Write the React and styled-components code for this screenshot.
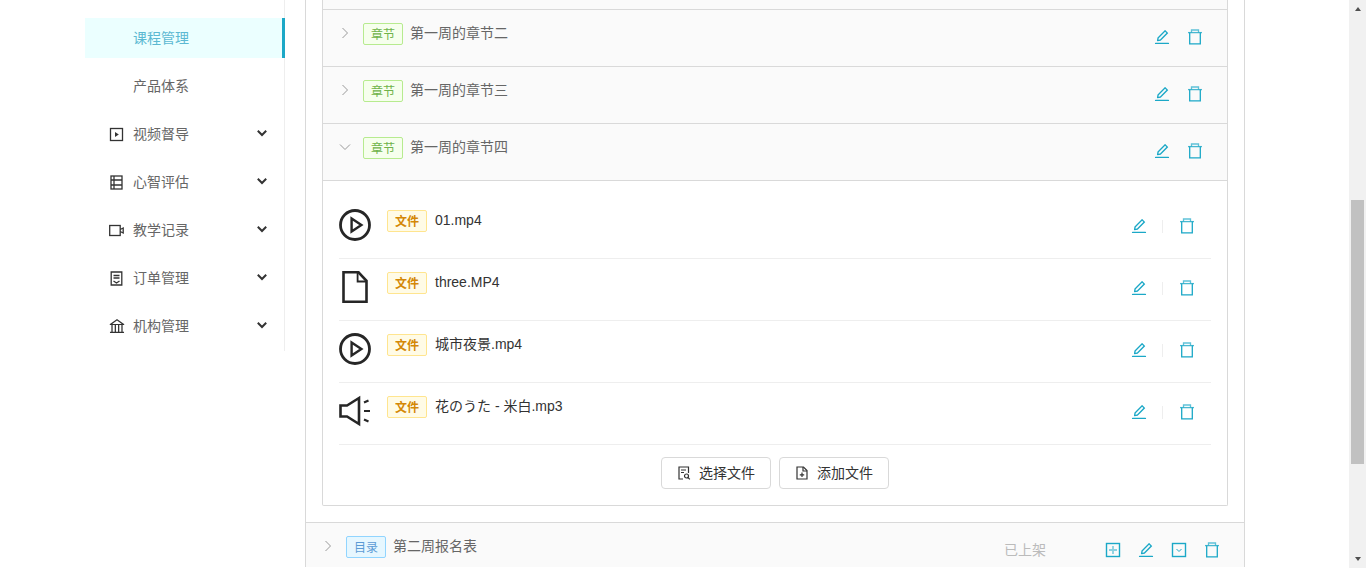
import React from "react";
import styled, { createGlobalStyle } from "styled-components";
import { AiOutlineEdit, AiOutlineBank } from "react-icons/ai";

const GlobalStyle = createGlobalStyle`
html, body {
  margin: 0;
  height: 568px;
  overflow: hidden;
  background: #fff;
}
body {
  font-family: "Liberation Sans", "Noto Sans CJK SC", sans-serif;
  font-size: 14px;
}
* { box-sizing: border-box; }
`;

const Shell = styled.div`
  display: flex;
  height: 568px;
  overflow: hidden;
`;

const Page = styled.div`
  flex: 1;
  display: flex;
  align-items: flex-start;
  padding-left: 85px;
  overflow: hidden;
`;

/* sidebar */
const Sidebar = styled.ul`
  width: 200px;
  height: 351px;
  flex: none;
  margin: 0;
  padding: 18px 0 0;
  list-style: none;
  border-right: 1px solid #eee;
  display: flex;
  flex-direction: column;
  gap: 8px;
`;

const MenuItem = styled.li`
  position: relative;
  width: 200px;
  height: 40px;
  display: flex;
  align-items: center;
  padding: 0 17px 0 24px;
  gap: 9px;
  color: ${(p) => (p.$active ? "#5cb9d2" : "#666")};
  background: ${(p) => (p.$active ? "#ebffff" : "transparent")};
  ${(p) => p.$active && "border-right: 3px solid #1ba8c7;"}
`;

const MenuIcon = styled.span`
  width: 15px;
  height: 15px;
  flex: none;
  display: flex;
  align-items: center;
  justify-content: center;
  color: #333;
`;

const MenuLabel = styled.span`
  flex: 1;
  line-height: 22px;
`;

/* main card */
const Card = styled.main`
  width: 940px;
  flex: none;
  margin-left: 20px;
  border-left: 1px solid #d9d9d9;
  border-right: 1px solid #d9d9d9;
`;

const CardBody = styled.div`
  padding: 0 16px 16px;
`;

const ChapterBox = styled.div`
  border: 1px solid #d9d9d9;
  border-top: none;
  border-radius: 0 0 2px 2px;
`;

const TopStub = styled.div`
  height: 9px;
  background: #fafafa;
`;

const Header = styled.div`
  height: ${(p) => (p.$tall ? "45px" : "57px")};
  display: flex;
  align-items: flex-start;
  padding: 13px 24px 0 16px;
  background: #fafafa;
  border-top: 1px solid #d9d9d9;
`;

const Chevron = styled.svg`
  width: 12px;
  height: 12px;
  flex: none;
  margin: 4px 12px 0 0;
  color: #999;
`;

const Tag = styled.span`
  width: 40px;
  height: 22px;
  flex: none;
  display: flex;
  align-items: center;
  justify-content: center;
  padding-bottom: 2px;
  font-size: 12px;
  border-radius: 2px;
  border: 1px solid ${(p) => p.$border};
  background: ${(p) => p.$bg};
  color: ${(p) => p.$color};
  font-weight: ${(p) => (p.$bold ? 700 : 400)};
`;

const Title = styled.span`
  flex: 1;
  margin-left: 7px;
  line-height: 20px;
  color: #666;
`;

const HeaderActions = styled.div`
  display: flex;
  gap: 17px;
  margin-top: 6px;
  color: #1ba8c7;
`;

const Status = styled.span`
  margin: 4px 59px 0 0;
  line-height: 20px;
  color: #bbb;
`;

const Panel = styled.div`
  border-top: 1px solid #d9d9d9;
  padding: 16px 16px 16px;
`;

const FileRow = styled.div`
  height: 62px;
  display: flex;
  align-items: flex-start;
  padding-top: 12px;
  border-bottom: 1px solid #eee;
`;

const FileIcon = styled.svg`
  width: 32px;
  height: 32px;
  flex: none;
  margin-right: 16px;
  color: #262626;
`;

const FileMeta = styled.div`
  flex: 1;
  display: flex;
  align-items: flex-start;
  margin-top: 1px;
`;

const FileName = styled.span`
  margin-left: 8px;
  line-height: 20px;
  color: #333;
`;

const RowActions = styled.ul`
  display: flex;
  margin: 0;
  padding: 0;
  list-style: none;
  margin-top: 7px;
`;

const RowAction = styled.li`
  position: relative;
  width: 48px;
  height: 20px;
  display: flex;
  justify-content: center;
  align-items: center;
  color: #1ba8c7;
  ${(p) => p.$divided && `
    &::after {
      content: "";
      position: absolute;
      right: 0;
      top: 4px;
      width: 1px;
      height: 13px;
      background: #eee;
    }
  `}
`;

const ButtonBar = styled.div`
  display: flex;
  justify-content: center;
  gap: 8px;
  margin-top: 12px;
`;

const Button = styled.button`
  width: 110px;
  height: 32px;
  display: flex;
  align-items: center;
  justify-content: center;
  gap: 8px;
  padding: 0 0 2px;
  font: inherit;
  color: #333;
  background: #fff;
  border: 1px solid #d9d9d9;
  border-radius: 4px;
`;

const ButtonIcon = styled.svg`
  width: 14px;
  height: 14px;
  flex: none;
  margin-top: 2px;
  color: #333;
`;

const ActionSvg = styled.svg`
  width: 16px;
  height: 16px;
  flex: none;
  display: block;
`;

const EditBox = styled.span`
  width: 16px;
  height: 16px;
  flex: none;
  display: flex;
  align-items: center;
  justify-content: center;
`;

/* scrollbar */
const Scrollbar = styled.div`
  width: 17px;
  flex: none;
  display: flex;
  flex-direction: column;
  align-items: center;
  background: #f1f1f1;
  height: 568px;
`;

const Arrow = styled.span`
  width: 0;
  height: 0;
  border-left: 3.5px solid transparent;
  border-right: 3.5px solid transparent;
  ${(p) => (p.$down ? "border-top: 4px solid #505050; margin-top: 93px;" : "border-bottom: 4px solid #505050; margin-top: 7px;")}
`;

const Thumb = styled.div`
  width: 13px;
  height: 264px;
  margin-top: 189px;
  background: #c1c1c1;
`;

const Edit = () => (
  <EditBox>
    <AiOutlineEdit size={18} style={{ flex: "none" }} />
  </EditBox>
);

const Trash = () => (
  <ActionSvg viewBox="0 0 16 16" fill="none" stroke="currentColor" strokeWidth="1.3">
    <path d="M1 3.600h14" strokeOpacity=".8" />
    <path d="M4.500 3.400V1h7v2.400" strokeOpacity=".7" />
    <path d="M2.700 3.600v11.200h10.600V3.600" />
  </ActionSvg>
);

const PlusBox = () => (
  <ActionSvg viewBox="0 0 16 16" fill="none" stroke="currentColor">
    <rect x="1.500" y="1.500" width="13" height="13" strokeWidth="1.400" />
    <path d="M8 4v8M4 8h8" strokeWidth="1.800" strokeOpacity=".5" />
  </ActionSvg>
);

const DownBox = () => (
  <ActionSvg viewBox="0 0 16 16" fill="none" stroke="currentColor">
    <rect x="1.500" y="1.500" width="13" height="13" strokeWidth="1.400" />
    <path d="M5.500 7l2.500 2.500L10.500 7" strokeWidth="1" />
  </ActionSvg>
);

const Arrowhead = ({ open }) => (
  <Chevron viewBox="0 0 12 12" fill="none" stroke="currentColor" strokeWidth="1">
    {open ? <path d="M1 3.500l5 5 5-5" /> : <path d="M3.500 1l5 5-5 5" />}
  </Chevron>
);

const PlayFile = () => (
  <FileIcon viewBox="0 0 32 32" fill="none" stroke="currentColor" strokeWidth="2.800">
    <circle cx="16" cy="16" r="14.500" />
    <path d="M12.600 9.400v13.200l9.800-6.600z" strokeWidth="2.400" />
  </FileIcon>
);

const BlankFile = () => (
  <FileIcon viewBox="0 0 32 32" fill="none" stroke="currentColor" strokeWidth="2.600">
    <path d="M4.500 1.300h15l8 8.500v21H4.500z" />
    <path d="M18.600 1.300v9.200h9" strokeWidth="1.800" />
  </FileIcon>
);

const SoundFile = () => (
  <FileIcon viewBox="0 0 32 32" fill="none" stroke="currentColor" strokeWidth="2.600">
    <path d="M1.500 10.500h6.500L20 3v26L8 21.500H1.500z" />
    <path d="M25 7.500l4.500-2M25 16h6M25 24.500l4.500 2" strokeWidth="2.200" />
  </FileIcon>
);

const MenuGlyph = ({ children }) => (
  <svg viewBox="0 0 15 15" width="15" height="15" fill="none" stroke="currentColor" strokeWidth="1.300">
    {children}
  </svg>
);

const MenuDown = styled.svg`
  width: 12px;
  height: 12px;
  flex: none;
  margin-top: -3px;
  color: #333;
`;

const menuItems = [
  { label: "课程管理", active: true },
  { label: "产品体系" },
  {
    label: "视频督导",
    sub: true,
    icon: (
      <MenuGlyph>
        <rect x="1.500" y="1.500" width="12" height="12" />
        <path d="M6 5v5l3.800-2.500z" fill="currentColor" stroke="none" />
      </MenuGlyph>
    ),
  },
  {
    label: "心智评估",
    sub: true,
    icon: (
      <MenuGlyph>
        <rect x="2" y="1" width="11" height="13" />
        <path d="M5 1v13M2 5h11M2 10h11" />
      </MenuGlyph>
    ),
  },
  {
    label: "教学记录",
    sub: true,
    icon: (
      <MenuGlyph>
        <rect x=".7" y="2.500" width="10.500" height="10" />
        <path d="M11.200 6.500l3-1.500v5l-3-1.500" />
      </MenuGlyph>
    ),
  },
  {
    label: "订单管理",
    sub: true,
    icon: (
      <MenuGlyph>
        <path d="M2.200 1h10.600v13H2.200z" />
        <path d="M4.500 4.500h6M4.500 7h6M4.500 10L7.500 12l3-2" />
      </MenuGlyph>
    ),
  },
  { label: "机构管理", sub: true, bank: true },
];

const chapters = ["第一周的章节二", "第一周的章节三", "第一周的章节四"];

const files = [
  { name: "01.mp4", Icon: PlayFile },
  { name: "three.MP4", Icon: BlankFile },
  { name: "城市夜景.mp4", Icon: PlayFile },
  { name: "花のうた - 米白.mp3", Icon: SoundFile },
];

const ChapterTag = () => (
  <Tag $border="#b7eb8f" $bg="#f6ffed" $color="#6fb34a">章节</Tag>
);

export default function App() {
  return (
    <Shell>
      <GlobalStyle />
      <Page>
        <Sidebar>
          {menuItems.map((item) => (
            <MenuItem key={item.label} $active={item.active}>
              <MenuIcon>
                {item.bank ? <AiOutlineBank size={18} style={{ flex: "none" }} /> : item.icon}
              </MenuIcon>
              <MenuLabel>{item.label}</MenuLabel>
              {item.sub && (
                <MenuDown viewBox="0 0 12 12" fill="none" stroke="currentColor" strokeWidth="2">
                  <path d="M1.800 3.800L6 8l4.200-4.200" />
                </MenuDown>
              )}
            </MenuItem>
          ))}
        </Sidebar>

        <Card>
          <CardBody>
            <ChapterBox>
              <TopStub />
              {chapters.map((name, i) => (
                <Header key={name}>
                  <Arrowhead open={i === 2} />
                  <ChapterTag />
                  <Title>{name}</Title>
                  <HeaderActions>
                    <Edit />
                    <Trash />
                  </HeaderActions>
                </Header>
              ))}
              <Panel>
                {files.map(({ name, Icon }) => (
                  <FileRow key={name}>
                    <Icon />
                    <FileMeta>
                      <Tag $border="#ffe58f" $bg="#fffbe6" $color="#d48806" $bold>文件</Tag>
                      <FileName>{name}</FileName>
                    </FileMeta>
                    <RowActions>
                      <RowAction $divided><Edit /></RowAction>
                      <RowAction><Trash /></RowAction>
                    </RowActions>
                  </FileRow>
                ))}
                <ButtonBar>
                  <Button>
                    <ButtonIcon viewBox="0 0 14 14" fill="none" stroke="currentColor" strokeWidth="1.200">
                      <path d="M6 13H2V1h9.500v6" />
                      <path d="M4 4h5M4 6.500h3" />
                      <circle cx="9.500" cy="10" r="2" />
                      <path d="M11 11.500l1.800 1.800" />
                    </ButtonIcon>
                    选择文件
                  </Button>
                  <Button>
                    <ButtonIcon viewBox="0 0 14 14" fill="none" stroke="currentColor" strokeWidth="1.200">
                      <path d="M2 1h6.500L12 4.500V13H2z" />
                      <path d="M8 1v4h4" />
                      <path d="M7 6.500v4.500M4.800 8.800h4.400" />
                    </ButtonIcon>
                    添加文件
                  </Button>
                </ButtonBar>
              </Panel>
            </ChapterBox>
          </CardBody>
          <Header $tall>
            <Arrowhead />
            <Tag $border="#91d5ff" $bg="#e6f7ff" $color="#5b9bd5">目录</Tag>
            <Title>第二周报名表</Title>
            <Status>已上架</Status>
            <HeaderActions>
              <PlusBox />
              <Edit />
              <DownBox />
              <Trash />
            </HeaderActions>
          </Header>
        </Card>
      </Page>
      <Scrollbar>
        <Arrow />
        <Thumb />
        <Arrow $down />
      </Scrollbar>
    </Shell>
  );
}
